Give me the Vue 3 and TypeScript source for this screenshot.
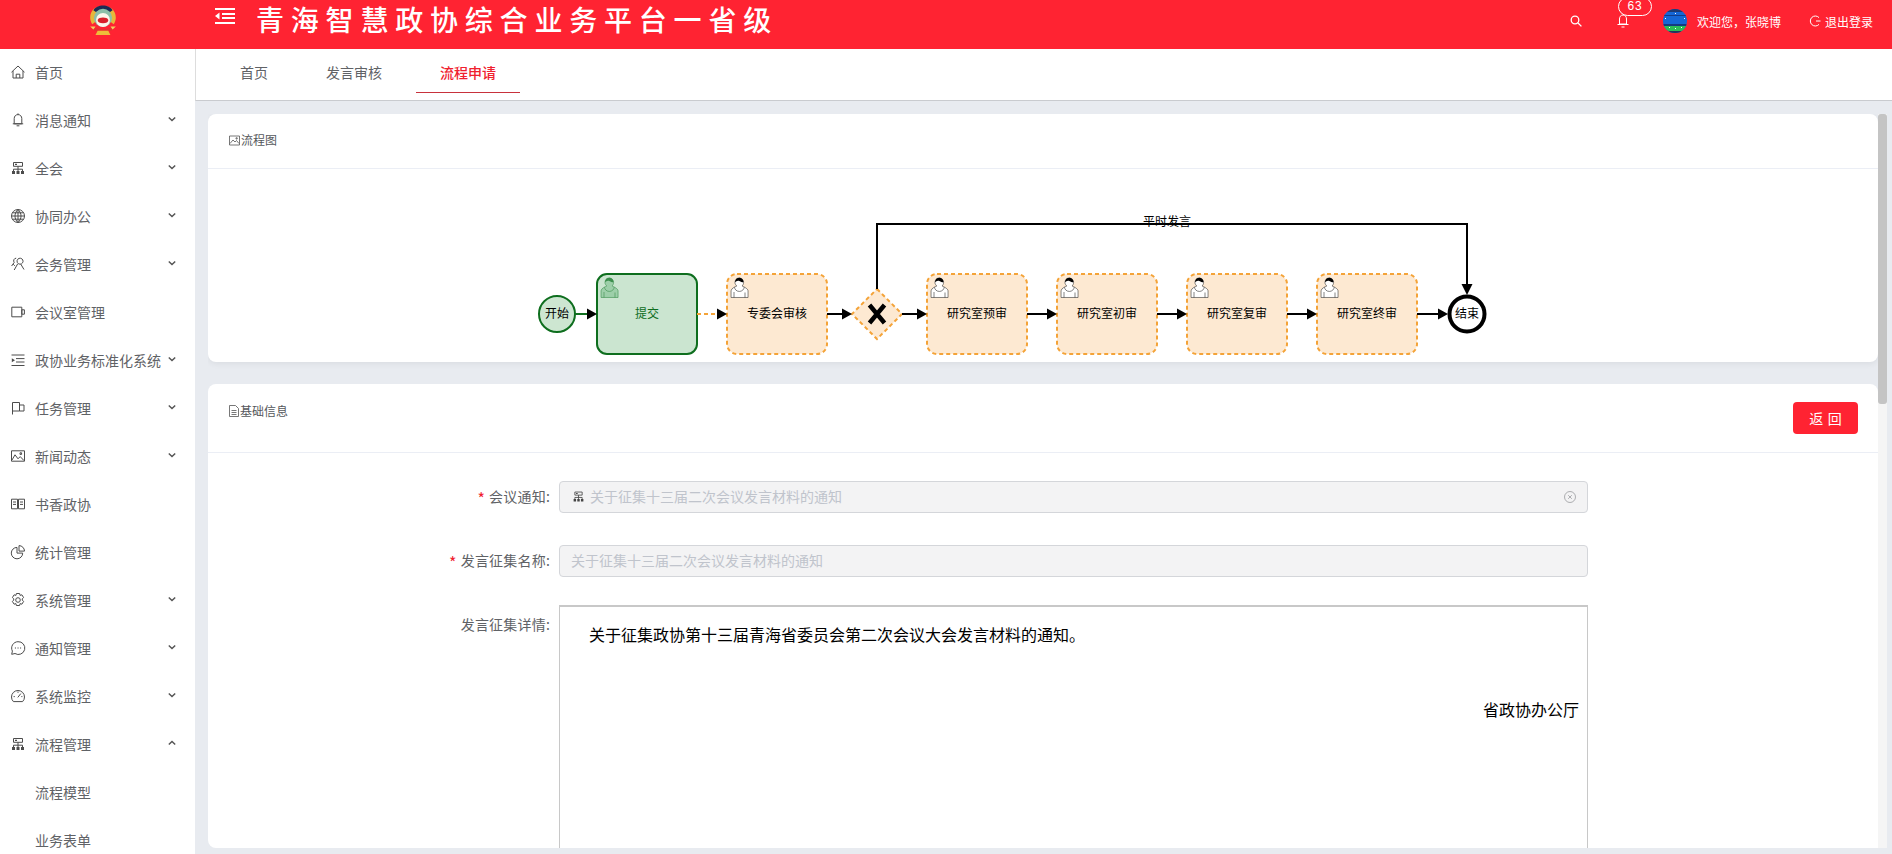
<script setup lang="ts">
interface NavItem {
  label: string
  icon: string
  arrow?: 'down' | 'up'
  child?: boolean
}

const icons: Record<string, { line: string; solid?: string }> = {
  home: { line: 'M1.5 8.2 8 2l6.5 6.2M3 7v7h10V7M6.2 14v-3.8h3.6V14' },
  bell: { line: 'M8 2.6c-2.3 0-3.8 1.7-3.8 4v5.2h7.6V6.6c0-2.3-1.5-4-3.8-4zM8 1.4v1.2M2.8 11.8h10.4M6.6 13.8h2.8' },
  org: {
    line: 'M3.5 2.5h9v3.8h-9zM8 6.3v2.9M3.5 11V9.2h9V11M8 9.2V11',
    solid: 'M5 3.8h2v1.1H5zM2 11h3v3H2zM6.5 11h3v3h-3zM11 11h3v3h-3z',
  },
  globe: { line: 'M8 1.5a6.5 6.5 0 1 0 0 13 6.5 6.5 0 0 0 0-13zM8 1.5c-4 3.500-4 9.500 0 13M8 1.500c4 3.500 4 9.500 0 13M8 1.500v13M1.500 8h13M2.400 4.800h11.200M2.400 11.200h11.200' },
  users: { line: 'M6.200 2.200a2.600 2.600 0 0 0-2 4.200L1.600 10M7.800 3.200A3 3 0 1 1 10 8.200a3 3 0 0 1-2.200-5zM7.600 8l-3.400 6M10.800 8.200 14 13.500M3.200 8.200l1.600 1.600' },
  video: { line: 'M1.800 3.200h10v9.600h-10zM11.800 5.800h2.600v4.400h-2.600z' },
  indent: { line: 'M1.500 3h13M6 6.600h8.500M6 10h8.500M1.500 13.500h13', solid: 'M1.800 6.200 5 8.200l-3.200 2z' },
  flag: { line: 'M2.500 14.500V2.500h7v8.500h-7M9.500 5h4.500v6H9.500' },
  image: { line: 'M1.500 2.800h13v10.400h-13zM2 12l3-5.200 3 4 2.200-2.200L14 12.600M10 4.800h1.600v1.600H10z' },
  book: { line: 'M1.500 3.200h6v9.600h-6zM8.500 3.200h6v9.600h-6zM3 6h3M3 8.400h3M10 6h3M10 8.400h3' },
  pie: { line: 'M7 3.400a5.700 5.700 0 1 0 5.700 5.700H7zM9 1.600a5.600 5.600 0 0 1 5.500 5.500H9z' },
  gear: { line: 'M6.400 1.500h3.200l.5 1.900 1.800-.6 1.700 2.800-1.400 1.300.1 1.200 1.300 1.300-1.700 2.800-1.800-.6-.5 1.900H6.400l-.5-1.900-1.800.6-1.700-2.800 1.300-1.300.1-1.200-1.400-1.300 1.700-2.800 1.800.6zM8 5.700a2.300 2.300 0 1 0 0 4.600 2.300 2.300 0 0 0 0-4.600z' },
  chat: { line: 'M8 1.700a6.400 6.400 0 0 0-5.600 9.400L1.700 14.300l3.300-.8A6.400 6.400 0 1 0 8 1.700z', solid: 'M4.900 7.400H6v1.100H4.900zM7.500 7.400h1.100v1.100H7.500zM10 7.400h1.100v1.100H10z' },
  gauge: { line: 'M3.400 13.600a6.500 6.500 0 1 1 9.200 0zM7.800 9.400l3-3.800M3.600 8.600h1.200M8 3.600v1.200M11.300 8.600h1.100' },
}

const menu: NavItem[] = [
  { label: '首页', icon: 'home' },
  { label: '消息通知', icon: 'bell', arrow: 'down' },
  { label: '全会', icon: 'org', arrow: 'down' },
  { label: '协同办公', icon: 'globe', arrow: 'down' },
  { label: '会务管理', icon: 'users', arrow: 'down' },
  { label: '会议室管理', icon: 'video' },
  { label: '政协业务标准化系统', icon: 'indent', arrow: 'down' },
  { label: '任务管理', icon: 'flag', arrow: 'down' },
  { label: '新闻动态', icon: 'image', arrow: 'down' },
  { label: '书香政协', icon: 'book' },
  { label: '统计管理', icon: 'pie' },
  { label: '系统管理', icon: 'gear', arrow: 'down' },
  { label: '通知管理', icon: 'chat', arrow: 'down' },
  { label: '系统监控', icon: 'gauge', arrow: 'down' },
  { label: '流程管理', icon: 'org', arrow: 'up' },
  { label: '流程模型', icon: '', child: true },
  { label: '业务表单', icon: '', child: true },
]

const tabs = ['首页', '发言审核', '流程申请']

// diagram coordinates are page coordinates, see the svg viewBox
const tasks = [
  { x: 597, label: '提交', done: true },
  { x: 727, label: '专委会审核', done: false },
  { x: 927, label: '研究室预审', done: false },
  { x: 1057, label: '研究室初审', done: false },
  { x: 1187, label: '研究室复审', done: false },
  { x: 1317, label: '研究室终审', done: false },
]

const links = [
  { from: 575, to: 587, cls: 'link-green' },
  { from: 697, to: 717, cls: 'link-dash' },
  { from: 827, to: 842, cls: '' },
  { from: 902, to: 917, cls: '' },
  { from: 1027, to: 1047, cls: '' },
  { from: 1157, to: 1177, cls: '' },
  { from: 1287, to: 1307, cls: '' },
  { from: 1417, to: 1438, cls: '' },
]

const userBody = 'm 15,12 c 0.909,-0.845 1.594,-2.049 1.594,-3.385 0,-2.554 -1.805,-4.622 -4.357,-4.622 -2.552,0 -4.288,2.068 -4.288,4.622 0,1.348 0.974,2.562 1.896,3.405 -0.529,0.187 -5.669,2.097 -5.794,4.756 v 6.718 h 17 v -6.718 c 0,-2.298 -5.528,-4.595 -6.051,-4.776 z m -8,6 l 0,5.5 m 11,0 l 0,-5'
const userCollar = 'm 15,12 m 2.162,1.009 c 0,2.447 -2.158,4.431 -4.821,4.431 -2.665,0 -4.822,-1.981 -4.822,-4.431'
const userHair = 'm 15,12 m -6.9,-3.8 c 0,0 2.251,-2.358 4.274,-1.177 2.024,1.181 4.221,1.537 4.124,0.965 -0.098,-0.57 -0.117,-3.791 -4.191,-4.136 -3.575,0.001 -4.208,3.367 -4.207,4.348 z'
</script>

<template>
  <div class="app">
    <header class="topbar">
      <div class="logo">
        <svg width="30" height="31" viewBox="2 1 26 29">
          <path d="M3 13C3 6 8 2 15 2s12 4 12 11c0 2-1 5-2 6l-4-3H9l-4 3c-1-1-2-4-2-6z" fill="#e6b73a" />
          <path d="M6 6C9 0 21 0 24 6l-3 2C18 5 12 5 9 8z" fill="#1c2a55" />
          <circle cx="15" cy="13" r="8.500" fill="#8cbfa8" />
          <circle cx="15" cy="15" r="6.500" fill="#fdf6ea" />
          <path d="M10 15c1-3 9-3 10 0 0 2-2 3-5 3s-5-1-5-3z" fill="#d8202a" />
          <path d="M4 21c5 3 17 3 22 0l-3 4H7z" fill="#e6312f" />
          <path d="M10 25h10l2 4H8z" fill="#eebc3a" />
          <path d="M3 21h5l-2 3zM22 21h5l-3 3z" fill="#f0d060" />
        </svg>
      </div>
      <svg class="toggle" width="21" height="18" viewBox="0 0 21 18">
        <path d="M1 1h20v2H1zM8 6h13v2H8zM8 10h13v2H8zM1 15h20v2H1z" fill="#fff" />
        <path d="M5.500 5.500v7L1 9z" fill="#fff" />
      </svg>
      <h1 class="title">青海智慧政协综合业务平台一省级</h1>
      <div class="topbar-right">
        <svg class="search" width="12" height="12" viewBox="0 0 12 12" fill="none" stroke="#fff" stroke-width="1.300">
          <circle cx="5" cy="5" r="3.800" />
          <path d="m8 8 3.400 3.400" />
        </svg>
        <div class="bell">
          <svg width="12" height="14" viewBox="0 0 12 14" fill="none" stroke="#fff">
            <path d="M6 1C3.600 1 2.500 3 2.500 5v5h7V5C9.500 3 8.400 1 6 1zM.5 10.500h11M4.500 13h3" />
          </svg>
          <span class="badge">63</span>
        </div>
        <svg class="avatar" width="24" height="24" viewBox="0 0 24 24">
          <clipPath id="avatar-clip"><circle cx="12" cy="12" r="12" /></clipPath>
          <g clip-path="url(#avatar-clip)">
            <rect width="24" height="24" fill="#1567d6" />
            <rect width="24" height="3" fill="#1f3a72" />
            <rect y="6" width="24" height="1" fill="#123c8a" />
            <rect y="15" width="24" height="2" fill="#143a80" />
            <rect y="17" width="24" height="5" fill="#2bbd57" />
            <rect y="22" width="24" height="2" fill="#26305a" />
            <path d="M12 4h1v1h-1zM2 9h1v1H2zM21 9h1v1h-1zM12 19h1v1h-1zM6 18h1v1H6zM18 18h1v1h-1z" fill="#fff" />
          </g>
        </svg>
        <span class="welcome">欢迎您，张晓博</span>
        <svg class="logout" width="12" height="12" viewBox="0 0 12 12" fill="none" stroke="#fff">
          <path d="M10 2.600A5 5 0 1 0 10 9.400M7 6h4.500" />
        </svg>
        <span class="logout-text">退出登录</span>
      </div>
    </header>

    <div class="layout">
      <aside class="sidebar">
        <div v-for="item in menu" :key="item.label" class="nav-item">
          <svg v-if="item.icon" class="nav-icon" width="16" height="16" viewBox="0 0 16 16">
            <path :d="icons[item.icon].line" fill="none" stroke="#4c4c4c" />
            <path v-if="icons[item.icon].solid" :d="icons[item.icon].solid" fill="#4c4c4c" />
          </svg>
          <span v-else class="nav-icon" />
          <span class="nav-label">{{ item.label }}</span>
          <svg v-if="item.arrow" class="nav-arrow" width="8" height="6" viewBox="0 0 8 6" fill="none" stroke="#555" stroke-width="1.500">
            <path :d="item.arrow === 'down' ? 'M.8 1.500 4 4.500l3.200-3' : 'M.8 4.500 4 1.500l3.200 3'" />
          </svg>
        </div>
      </aside>

      <main class="main">
        <nav class="tabs">
          <div v-for="(tab, i) in tabs" :key="tab" class="tab" :class="{ active: i === 2 }">{{ tab }}</div>
        </nav>

        <div class="content">
          <div class="scroller">
            <section class="card card-flow">
              <div class="card-head">
                <div class="card-title">
                  <svg width="11" height="11" viewBox="0 0 11 11" fill="none" stroke="#555" stroke-width=".8">
                    <path d="M.5 1h10v9H.5zM1 8.500l3-3.500 2 2 1.500-1.500L10 8.500M7 2.800h1.200V4H7z" />
                  </svg>
                  <span>流程图</span>
                </div>
              </div>
              <svg class="diagram" width="1670" height="193" viewBox="208 169 1670 193">
                <circle cx="557" cy="314" r="18" fill="#cde6d1" stroke="#0e6e1e" stroke-width="2" />
                <text x="557" y="318" class="node-text">开始</text>

                <g v-for="t in tasks" :key="t.x" :transform="`translate(${t.x} 274)`">
                  <rect
                    width="100"
                    height="80"
                    rx="10"
                    :class="t.done ? 'task-done' : 'task-todo'"
                  />
                  <g :class="t.done ? 'user-done' : 'user-todo'">
                    <path :d="userBody" class="user-shape" />
                    <path :d="userCollar" class="user-shape" />
                    <path :d="userHair" class="user-hair" />
                  </g>
                  <text x="50" y="44" class="node-text" :class="{ 'node-done': t.done }">{{ t.label }}</text>
                </g>

                <path d="M877 289 902 314 877 339 852 314z" class="task-todo" />
                <path d="M869.500 305 884.500 323M884.500 305 869.500 323" stroke="#000" stroke-width="4.500" fill="none" />

                <g v-for="l in links" :key="l.from">
                  <path :d="`M${l.from} 314H${l.to}`" class="link" :class="l.cls" />
                  <path :d="`M${l.to} 308.500 ${l.to + 10} 314 ${l.to} 319.500z`" fill="#000" />
                </g>

                <path d="M877 289V224H1467V284" class="link" />
                <path d="M1461.500 284 1472.500 284 1467 295z" fill="#000" />
                <text x="1167" y="226" class="node-text">平时发言</text>

                <circle cx="1467" cy="314" r="17.500" fill="#fff" stroke="#000" stroke-width="4" />
                <text x="1467" y="318" class="node-text">结束</text>
              </svg>
            </section>

            <section class="card card-info">
              <div class="card-head card-head-info">
                <div class="card-title">
                  <svg width="10" height="12" viewBox="0 0 10 12" fill="none" stroke="#555" stroke-width=".8">
                    <path d="M.5.500h6l3 3v8h-9zM2.500 5.500h5M2.500 7.500h5M2.500 9.500h5" />
                  </svg>
                  <span>基础信息</span>
                </div>
                <button class="back-btn" type="button">返 回</button>
              </div>

              <form class="form">
                <div class="form-row">
                  <label class="form-label"><i>*</i>会议通知:</label>
                  <div class="input">
                    <svg width="13" height="13" viewBox="0 0 16 16">
                      <path :d="icons.org.line" fill="none" stroke="#444" />
                      <path :d="icons.org.solid" fill="#444" />
                    </svg>
                    <span class="placeholder">关于征集十三届二次会议发言材料的通知</span>
                    <svg class="clear" width="12" height="12" viewBox="0 0 12 12" fill="none" stroke="#9a9ca0" stroke-width=".8">
                      <circle cx="6" cy="6" r="5.500" />
                      <path d="m4.200 4.200 3.600 3.600m0-3.600L4.200 7.800" />
                    </svg>
                  </div>
                </div>
                <div class="form-row">
                  <label class="form-label"><i>*</i>发言征集名称:</label>
                  <div class="input input-plain">
                    <span class="placeholder">关于征集十三届二次会议发言材料的通知</span>
                  </div>
                </div>
                <div class="form-row form-row-editor">
                  <label class="form-label">发言征集详情:</label>
                  <div class="editor">
                    <p class="editor-first">关于征集政协第十三届青海省委员会第二次会议大会发言材料的通知。</p>
                    <p class="editor-sign">省政协办公厅</p>
                  </div>
                </div>
              </form>
            </section>
          </div>
          <div class="scroll-track"><div class="scroll-thumb" /></div>
        </div>
      </main>
    </div>
  </div>
</template>

<style>
html,
body {
  margin: 0;
  height: 100%;
  overflow: hidden;
}
</style>

<style scoped>
.app {
  height: 854px;
  display: flex;
  flex-direction: column;
  font-family: "Noto Sans CJK SC", "Liberation Sans", sans-serif;
  color: #606266;
}

/* Top bar */
.topbar {
  height: 49px;
  flex: none;
  display: flex;
  align-items: center;
  background: #ff2332;
  color: #fff;
}
.logo {
  width: 214px;
  height: 49px;
  flex: none;
  box-sizing: border-box;
  padding: 5px 0 0 88px;
}
.logo svg {
  display: block;
}
.toggle {
  flex: none;
  margin-top: -17px;
}
.title {
  margin: -12px 0 0 21px;
  font-size: 28px;
  line-height: 38px;
  font-weight: 500;
  letter-spacing: 6.800px;
  white-space: nowrap;
}
.topbar-right {
  margin-left: auto;
  padding-right: 19px;
  display: flex;
  align-items: center;
  font-size: 12px;
  margin-top: -7px;
}
.search {
  margin-right: 35px;
}
.bell {
  position: relative;
  width: 12px;
  height: 14px;
  margin-right: 34px;
}
.bell svg {
  display: block;
}
.badge {
  position: absolute;
  left: 1px;
  top: -17px;
  width: 34px;
  height: 19px;
  box-sizing: border-box;
  border: 1px solid #fff;
  border-radius: 10px;
  background: #ff2332;
  font-family: "Liberation Sans", sans-serif;
  font-size: 12px;
  line-height: 17px;
  letter-spacing: .8px;
  text-align: center;
}
.avatar {
  margin-right: 10px;
}
.welcome {
  width: 112px;
  white-space: nowrap;
}
.logout {
  margin-right: 4px;
}
.logout-text {
  white-space: nowrap;
}

/* Sidebar */
.layout {
  flex: 1;
  min-height: 0;
  display: flex;
}
.sidebar {
  width: 195px;
  flex: none;
  overflow: hidden;
  background: #fff;
}
.nav-item {
  height: 48px;
  box-sizing: border-box;
  display: flex;
  align-items: center;
  padding: 0 0 2px 10px;
  font-size: 14px;
  color: #5f6266;
}
.nav-icon {
  width: 16px;
  flex: none;
  margin-right: 9px;
}
.nav-label {
  white-space: nowrap;
}
.nav-arrow {
  position: absolute;
  left: 168px;
  margin-top: -2px;
}

/* Tabs */
.main {
  flex: 1;
  min-width: 0;
  display: flex;
  flex-direction: column;
}
.tabs {
  height: 52px;
  flex: none;
  box-sizing: border-box;
  display: flex;
  gap: 10px;
  padding-left: 20px;
  background: #fff;
  border-left: 1px solid #ddd;
  border-bottom: 1px solid #c9cbcf;
}
.tab {
  height: 43px;
  padding: 0 24px;
  font-size: 14px;
  line-height: 46px;
  color: #606266;
}
.tab.active {
  color: #f0202e;
  font-weight: 500;
  border-bottom: 1px solid #c8323c;
}

/* Content */
.content {
  flex: 1;
  min-height: 0;
  display: flex;
  padding: 13px 5px 6px 13px;
  background: #e8ebf0;
}
.scroller {
  flex: 1;
  min-width: 0;
  overflow: hidden;
  border-bottom-left-radius: 8px;
}
.scroll-track {
  width: 9px;
  flex: none;
  background: #f5f5f5;
}
.scroll-thumb {
  height: 290px;
  background: #c4c4c4;
  border-radius: 3px;
}
.card {
  background: #fff;
  border-radius: 8px;
}
.card-flow {
  height: 248px;
  margin-bottom: 22px;
  box-shadow: 0 2px 6px rgba(0, 0, 0, .06);
}
.card-info {
  height: 1588px;
}
.card-head {
  height: 55px;
  box-sizing: border-box;
  padding: 16px 21px 0;
  border-bottom: 1px solid #ebeef5;
}
.card-head-info {
  height: 69px;
  padding: 17px 20px 0 21px;
  display: flex;
  justify-content: space-between;
  align-items: flex-start;
}
.card-title {
  display: flex;
  align-items: center;
  gap: 1px;
  font-size: 12px;
  line-height: 20px;
  color: #55585c;
}
.back-btn {
  width: 65px;
  height: 32px;
  margin-top: 1px;
  padding: 0;
  border: 0;
  border-radius: 4px;
  background: #ff2332;
  color: #fff;
  font-family: inherit;
  font-size: 14px;
  word-spacing: 1.500px;
}

/* Diagram */
.diagram {
  display: block;
}
.node-text {
  font-size: 12px;
  text-anchor: middle;
  fill: #000;
}
.node-done {
  fill: #0e6e1e;
}
.task-done {
  fill: #cbe5d0;
  stroke: #0e6e1e;
  stroke-width: 2;
}
.task-todo {
  fill: #fde9d2;
  stroke: #f4a338;
  stroke-width: 2;
  stroke-dasharray: 4 3;
}
.user-shape {
  stroke-width: .6;
}
.user-todo .user-shape {
  fill: #fff;
  stroke: #333;
}
.user-todo .user-hair {
  fill: #000;
}
.user-done .user-shape {
  fill: #9dcfa9;
  stroke: #3d8f4e;
}
.user-done .user-hair {
  fill: #3d8f4e;
}
.link {
  fill: none;
  stroke: #000;
  stroke-width: 2;
}
.link-green {
  stroke: #0e6e1e;
}
.link-dash {
  stroke: #f4a338;
  stroke-dasharray: 4 3;
}

/* Form */
.form {
  padding-top: 28px;
}
.form-row {
  display: flex;
  gap: 9px;
  margin-bottom: 32px;
}
.form-row-editor {
  margin-top: -4px;
}
.form-label {
  width: 342px;
  flex: none;
  text-align: right;
  font-size: 14px;
  line-height: 30px;
  letter-spacing: .2px;
  color: #606266;
  white-space: nowrap;
}
.form-row-editor .form-label {
  padding-top: 3px;
  line-height: 32px;
}
.form-label i {
  margin-right: 4px;
  color: #f0202e;
  font-style: normal;
  font-size: 16px;
  line-height: 1;
  vertical-align: -3px;
}
.input {
  width: 1029px;
  height: 32px;
  box-sizing: border-box;
  display: flex;
  align-items: center;
  padding: 0 11px 2px 12px;
  gap: 5px;
  background: #f3f3f4;
  border: 1px solid #d4d6da;
  border-radius: 4px;
  font-size: 14px;
}
.input-plain {
  padding-left: 11px;
}
.placeholder {
  color: #c0c4cc;
}
.clear {
  margin-left: auto;
  margin-top: 2px;
}
.editor {
  width: 1029px;
  height: 1300px;
  box-sizing: border-box;
  padding: 15px 8px 0 8px;
  border: 1px solid #c8c8c8;
  border-top-width: 2px;
  font-size: 16px;
  line-height: 24px;
  color: #000;
}
.editor p {
  margin: 0;
}
.editor-first {
  text-indent: 21px;
}
.editor .editor-sign {
  margin-top: 51px;
  text-align: right;
}
</style>
